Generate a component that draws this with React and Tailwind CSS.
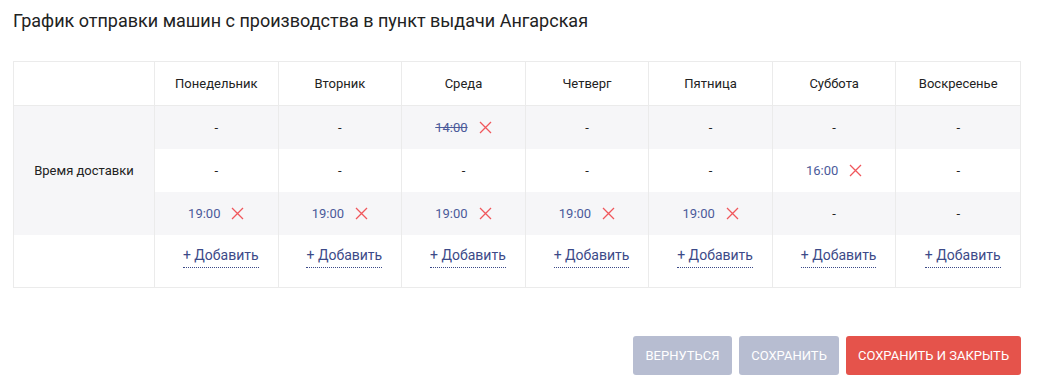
import React from "react";

const days = ["Понедельник", "Вторник", "Среда", "Четверг", "Пятница", "Суббота", "Воскресенье"];
const rows = [
  [null, null, { t: "14:00", struck: true }, null, null, null, null],
  [null, null, null, null, null, { t: "16:00" }, null],
  [{ t: "19:00" }, { t: "19:00" }, { t: "19:00" }, { t: "19:00" }, { t: "19:00" }, null, null],
];

function X() {
  return (
    <svg width="13" height="13" viewBox="0 0 13 13" className="shrink-0">
      <path d="M1 1 L12 12 M12 1 L1 12" stroke="#f0575c" strokeWidth="1.3" fill="none" />
    </svg>
  );
}

function Cell({ v }) {
  if (!v) return <span className="text-[13px] text-[#222]">-</span>;
  return (
    <span className="flex items-center gap-[11px]">
      <span className={"text-[13px] text-[#4b5a9a] " + (v.struck ? "line-through" : "")}>{v.t}</span>
      <X />
    </span>
  );
}

export default function App() {
  return (
    <div className="w-[1039px] h-[390px] bg-white px-[13px] pt-[8px]" style={{ fontFamily: "Roboto, 'Liberation Sans', sans-serif" }}>
      <h1 className="text-[18px] leading-[25px] text-[#222] font-normal">
        График отправки машин с производства в пункт выдачи Ангарская
      </h1>
      <div className="mt-[28px] w-[1008px] border border-[#ebebeb] grid grid-cols-[141px_repeat(7,1fr)]">
        <div className="h-[44px] border-r border-b border-[#ebebeb]"></div>
        {days.map((d, i) => (
          <div
            key={d}
            className={"h-[44px] flex items-center justify-center text-[13px] text-[#222] border-b border-[#ebebeb] " + (i < 6 ? "border-r" : "")}
          >
            {d}
          </div>
        ))}
        <div className="row-span-3 bg-[#f6f6f8] border-r border-[#ebebeb] flex items-center justify-center text-[13px] text-[#222]">
          Время доставки
        </div>
        {rows.map((r, ri) =>
          r.map((v, ci) => (
            <div
              key={ri + "-" + ci}
              className={
                "h-[43px] flex items-center justify-center border-[#ebebeb] " +
                (ri % 2 === 0 ? "bg-[#f6f6f8] " : "bg-white ") +
                (ci < 6 ? "border-r" : "")
              }
            >
              <Cell v={v} />
            </div>
          ))
        )}
        <div className="h-[52px] border-r border-[#ebebeb]"></div>
        {days.map((d, i) => (
          <div key={"add" + d} className={"h-[52px] flex items-start justify-center pl-[9px] pt-[11px] border-[#ebebeb] " + (i < 6 ? "border-r" : "")}>
            <span className="text-[14px] leading-[19px] text-[#3c4a88] border-b border-dotted border-[#3c4a88] pb-[2px]">+ Добавить</span>
          </div>
        ))}
      </div>
      <div className="mt-[48px] w-[1008px] flex justify-end gap-[7px]">
        <button className="h-[39px] w-[99px] rounded-[3px] bg-[#b7bdd1] text-white text-[13px] uppercase">Вернуться</button>
        <button className="h-[39px] w-[100px] rounded-[3px] bg-[#b7bdd1] text-white text-[13px] uppercase">Сохранить</button>
        <button className="h-[39px] w-[175px] rounded-[3px] bg-[#e5534b] text-white text-[13px] uppercase">Сохранить и закрыть</button>
      </div>
    </div>
  );
}
